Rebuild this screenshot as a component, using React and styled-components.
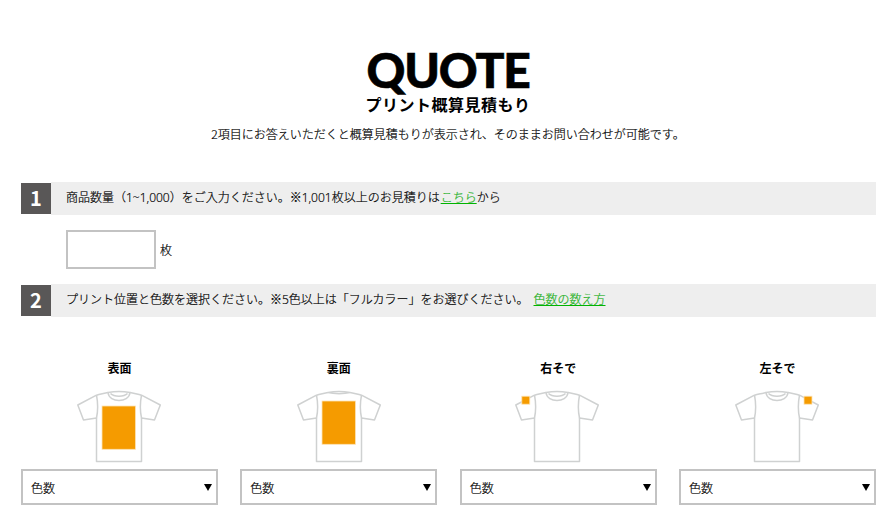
import React from "react";
import styled, { createGlobalStyle, css } from "styled-components";

const Global = createGlobalStyle`
  html, body { margin: 0; padding: 0; background: #fff; }
  body { font-family: "Noto Sans CJK JP", "Noto Sans", sans-serif; color: #000; }
`;

const bodyText = css`
  font-size: 12px;
  font-weight: 300;
  -webkit-text-stroke: 0.2px;
`;

const Page = styled.div`
  width: 888px;
  height: 529px;
  overflow: hidden;
  box-sizing: border-box;
  padding: 47px 12px 0 21px;
`;

const Header = styled.header`
  display: flex;
  flex-direction: column;
  align-items: center;
  margin-bottom: 39px;
  padding-right: 1px;
`;

const Title = styled.h1`
  margin: 0;
  font-family: "Lato", sans-serif;
  font-weight: 900;
  font-size: 48px;
  line-height: 46px;
  letter-spacing: -1.2px;
  -webkit-text-stroke: 0.6px #000;
`;

const Subtitle = styled.h2`
  margin: 0;
  font-size: 16px;
  font-weight: 700;
  line-height: 22px;
  letter-spacing: 0.5px;
`;

const Lead = styled.p`
  ${bodyText}
  margin: 10px 0 0;
  line-height: 18px;
`;

const StepBar = styled.div`
  display: flex;
  align-items: stretch;
  height: 33px;
  background: linear-gradient(#eee, #eee) no-repeat 30px 0 / 100% 100%;
`;

const StepNumber = styled.div`
  width: 30px;
  height: 31px;
  margin-top: 1px;
  background: #595757;
  color: #fff;
  font-size: 20px;
  font-weight: 700;
  line-height: 29px;
  text-align: center;
`;

const StepText = styled.p`
  ${bodyText}
  margin: 0 0 0 15px;
  font-family: "Open Sans", "Noto Sans CJK JP", sans-serif;
  line-height: 32px;
  white-space: nowrap;
`;

const GreenLink = styled.a`
  color: #1fb01f;
  text-decoration: underline;
  text-decoration-color: #00b400;
  margin-left: ${p => p.$gap || 0}px;
`;

const QuantityRow = styled.div`
  display: flex;
  align-items: center;
  gap: 4px;
  margin: 15px 0 15px 45px;
`;

const QuantityInput = styled.input`
  box-sizing: border-box;
  width: 90px;
  height: 39px;
  border: 2px solid #c3c3c3;
  background: #fff;
  padding: 0;
  outline: none;
`;

const Unit = styled.span`
  ${bodyText}
  line-height: 18px;
`;

const Positions = styled.div`
  display: grid;
  grid-template-columns: repeat(4, 197px);
  justify-content: space-between;
  margin-top: 42px;
`;

const Position = styled.div`
  display: flex;
  flex-direction: column;
  align-items: center;
`;

const PositionLabel = styled.div`
  font-size: 12px;
  font-weight: 700;
  line-height: 18px;
  height: 18px;
`;

const ShirtSvg = styled.svg`
  display: block;
  width: 84px;
  height: 74px;
  margin: 13px 0 5px ${p => p.$nudge}px;
`;

const SelectBox = styled.div`
  ${bodyText}
  box-sizing: border-box;
  width: 197px;
  height: 36px;
  border: 2px solid #c3c3c3;
  display: flex;
  align-items: center;
  justify-content: space-between;
  padding: 0 4px 0 8px;
`;

const Arrow = styled.span`
  width: 0;
  height: 0;
  border-left: 4px solid transparent;
  border-right: 4px solid transparent;
  border-top: 7px solid #000;
`;

const Shirt = ({ collarBack, print, nudge }) => (
  <ShirtSvg viewBox="0 0 84 74" fill="none" $nudge={nudge}>
    <g stroke="#cfd1d1" strokeWidth="1.5" strokeLinejoin="round">
      <path d="M31 2.5 C27 3.5 23 4.3 19.5 5.2 L0.8 15 L6.5 30 L19.5 28 L19.5 71.5 L64.5 71.5 L64.5 28 L77.5 30 L83.3 15 L64.5 5.2 C61 4.3 57 3.5 53 2.5" />
      <path d="M19.5 5.2 C21 13 21 21 19.5 28 M64.5 5.2 C63 13 63 21 64.5 28" />
      {collarBack ? (
        <path d="M31 2.5 C37 4 47 4 53 2.5 M31 2.5 C37 1.5 47 1.5 53 2.5" />
      ) : (
        <>
          <path d="M31 2.5 C37 1.3 47 1.3 53 2.5 C52.5 8 47 10.5 42 10.5 C37 10.5 31.5 8 31 2.5 Z" />
          <path d="M33.5 3.5 C37 7 47 7 50.5 3.5" />
        </>
      )}
    </g>
    {print === "body" && <rect x="25" y={collarBack ? 11 : 16} width="33.5" height="43.3" fill="#f59b00" stroke="#fde3b5" strokeWidth="0.8" />}
    {print === "right" && <rect x="6.8" y="6.2" width="8" height="8" fill="#f59b00" stroke="#fde3b5" strokeWidth="0.8" />}
    {print === "left" && <rect x="69" y="6.2" width="8" height="8" fill="#f59b00" stroke="#fde3b5" strokeWidth="0.8" />}
  </ShirtSvg>
);

const positions = [
  { label: "表面", print: "body", nudge: -1 },
  { label: "裏面", print: "body", collarBack: true, nudge: 0 },
  { label: "右そで", print: "right", nudge: -2 },
  { label: "左そで", print: "left", nudge: 0 },
];

export default function App() {
  return (
    <Page>
      <Global />
      <Header>
        <Title>QUOTE</Title>
        <Subtitle>プリント概算見積もり</Subtitle>
        <Lead>2項目にお答えいただくと概算見積もりが表示され、そのままお問い合わせが可能です。</Lead>
      </Header>
      <StepBar>
        <StepNumber>1</StepNumber>
        <StepText>
          商品数量（1~1,000）をご入力ください。※1,001枚以上のお見積りは<GreenLink $gap={1}>こちら</GreenLink>から
        </StepText>
      </StepBar>
      <QuantityRow>
        <QuantityInput />
        <Unit>枚</Unit>
      </QuantityRow>
      <StepBar>
        <StepNumber>2</StepNumber>
        <StepText>
          プリント位置と色数を選択ください。※5色以上は「フルカラー」をお選びください。<GreenLink $gap={5}>色数の数え方</GreenLink>
        </StepText>
      </StepBar>
      <Positions>
        {positions.map(p => (
          <Position key={p.label}>
            <PositionLabel>{p.label}</PositionLabel>
            <Shirt print={p.print} collarBack={p.collarBack} nudge={p.nudge} />
            <SelectBox>
              色数
              <Arrow />
            </SelectBox>
          </Position>
        ))}
      </Positions>
    </Page>
  );
}
